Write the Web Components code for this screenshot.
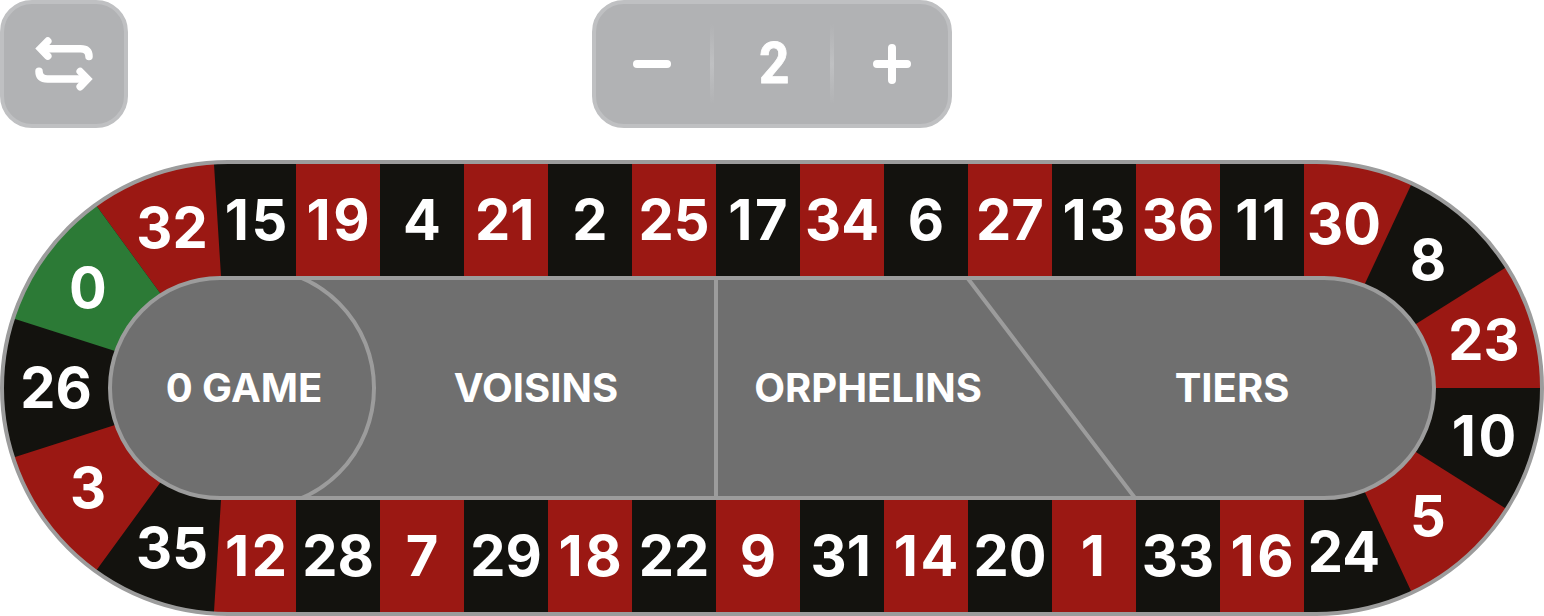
<!DOCTYPE html>
<html lang="en">
<head>
<meta charset="utf-8">
<title>Racetrack</title>
<style>
  body { margin: 0; background: #fff; font-family: Inter, "Liberation Sans", sans-serif; font-weight: 700; color: #fff; }
</style>
</head>
<body>
<race-track></race-track>

<template id="t-track">
  <style>
    :host { display: flex; flex-direction: column; gap: 32px; width: 1544px; height: 616px; }
    header { display: grid; grid-template-columns: 1fr 360px 1fr; height: 128px; }
    .swap { width: 128px; }
  </style>
  <header>
    <control-panel class="swap">
      <svg width="120" height="120" viewBox="4 4 120 120" fill="none" stroke="#fff" stroke-width="7.5" stroke-linecap="round" stroke-linejoin="miter">
        <path d="M42 48.700H80.500Q89 48.700 89 56.500"/>
        <path d="M39 71.300Q39 79 47.500 79H86"/>
        <path d="M47.800 41.100L40.500 48.600L47.800 56.100"/>
        <path d="M80.200 71.500L87.500 79L80.200 86.700"/>
      </svg>
    </control-panel>
    <control-panel>
      <number-stepper value="2"></number-stepper>
    </control-panel>
  </header>
  <track-board></track-board>
</template>

<template id="t-panel">
  <style>
    :host { display: flex; box-sizing: border-box; height: 128px; border: 4px solid #bfc0c2; border-radius: 32px; background: #b1b2b4; }
  </style>
  <slot></slot>
</template>

<template id="t-stepper">
  <style>
    :host { display: grid; grid-template-columns: 112px 8px 112px 8px 112px; align-items: center; justify-items: center; width: 352px; height: 120px; }
    i { width: 4px; height: 80px; background: linear-gradient(#bfc0c200, #bfc0c2, #bfc0c200); }
    .value { padding-left: 4px; font: 700 57px/64px Roboto, "Liberation Sans", sans-serif; transform: scaleX(.93); -webkit-text-stroke: .8px #fff; }
    svg { display: block; }
  </style>
  <svg width="40" height="40" stroke="#fff" stroke-width="8" stroke-linecap="round"><path d="M5 20H35"/></svg>
  <i></i>
  <span class="value"></span>
  <i></i>
  <svg width="40" height="40" stroke="#fff" stroke-width="8" stroke-linecap="round"><path d="M5 20H35M20 4V36"/></svg>
</template>

<template id="t-cell">
  <style>
    :host { display: flex; align-items: center; justify-content: center; width: 84px; height: 112px; font-size: 56px; line-height: 68px; white-space: nowrap; background: var(--pocket, transparent); }
    :host([color="red"]) { --pocket: #9b1813; }
    :host([color="black"]) { --pocket: #13120e; }
    /* The narrow figure 1 takes a little extra room on its right. */
    :host([ones="first"]) span { letter-spacing: 2.6px; margin-right: -2.6px; }
    :host([ones="last"]) span { padding-right: 2.6px; }
    :host([ones="both"]) span { letter-spacing: 2.6px; }
  </style>
  <span><slot></slot></span>
</template>

<template id="t-board">
  <style>
    :host { display: grid; grid-template-rows: 112px 4px 216px 4px 112px; position: relative; box-sizing: border-box; height: 456px; padding: 4px 0; }
    .shape { position: absolute; left: 0; top: 0; }
    .row { display: flex; position: relative; margin-left: 296px; }
    .top { grid-row: 1; }
    .bottom { grid-row: 5; }
    .bets { grid-row: 3; position: relative; display: grid; grid-template-columns: 264px 320px 344px 384px; margin-left: 112px; align-items: center; justify-items: center; font-size: 40px; line-height: 48px; white-space: nowrap; }
    .pin { position: absolute; transform: translate(-50%, -50%); }
  </style>
  <svg class="shape" width="1544" height="456" viewBox="0 160 1544 456">
    <defs>
      <clipPath id="rim"><rect x="1" y="161" width="1542" height="454" rx="227"/></clipPath>
      <clipPath id="infield"><rect x="110" y="278" width="1324" height="220" rx="110"/></clipPath>
      <clipPath id="half"><rect x="280" y="270" width="110" height="240"/></clipPath>
    </defs>
    <g clip-path="url(#rim)">
      <rect y="160" width="1544" height="456" fill="#13120e"/>
      <g fill="#9b1813">
        <path d="M66 164V150H213.100L221 276V300H165L160 293Z"/>
        <path d="M1304 150H1427.400L1365 283.500L1360 294H1304Z"/>
        <path d="M1594 212V388H1420L1400 334Z"/>
        <path d="M-10 465V626H66V612L160 483L170 469L125 422L115 425Z"/>
        <path d="M213.100 626L221 500V480H297V626Z"/>
        <path d="M1427.400 626L1365 492.500L1360 482L1400 442L1594 564V626Z"/>
      </g>
      <path fill="#2c7a36" d="M-10 311V150H66V164L160 293L170 307L125 354L115 351Z"/>
    </g>
    <g fill="none" stroke="#9c9c9c" stroke-width="4">
      <rect x="2" y="162" width="1540" height="452" rx="226"/>
      <rect x="110" y="278" width="1324" height="220" rx="110" fill="#6f6f6f"/>
      <g clip-path="url(#infield)">
        <circle cx="254" cy="388" r="120" clip-path="url(#half)"/>
        <path d="M716 278V498M967.500 278L1135 498"/>
      </g>
    </g>
  </svg>
  <div class="row top"></div>
  <div class="bets"><span>0 GAME</span><span>VOISINS</span><span>ORPHELINS</span><span>TIERS</span></div>
  <div class="row bottom"></div>
</template>

<script>
  const clone = id => document.getElementById(id).content.cloneNode(true);

  class Base extends HTMLElement {
    constructor(id) {
      super();
      this.attachShadow({ mode: 'open' }).append(clone(id));
    }
  }

  customElements.define('control-panel', class extends Base {
    constructor() { super('t-panel'); }
  });

  customElements.define('number-stepper', class extends Base {
    constructor() { super('t-stepper'); }
    connectedCallback() {
      this.shadowRoot.querySelector('.value').textContent = this.getAttribute('value');
    }
  });

  customElements.define('track-pocket', class extends Base {
    constructor() { super('t-cell'); }
    connectedCallback() {
      const n = this.textContent;
      if (n === '11') this.setAttribute('ones', 'both');
      else if (n.endsWith('1')) this.setAttribute('ones', 'last');
      else if (n.startsWith('1')) this.setAttribute('ones', 'first');
    }
  });

  // Straight runs of pockets, alternating colours.
  const ROWS = {
    '.top': [[19, 4, 21, 2, 25, 17, 34, 6, 27, 13, 36, 11], ['red', 'black']],
    '.bottom': [[28, 7, 29, 18, 22, 9, 31, 14, 20, 1, 33, 16], ['black', 'red']]
  };
  // Numbers on the curved ends: [number, centre x, centre y].
  const ENDS = [
    [15, 256, 60], [32, 172, 68], [0, 88, 128], [26, 56, 228], [3, 88, 328], [35, 172, 388], [12, 256, 396],
    [30, 1344, 64], [8, 1428, 100], [23, 1484, 180], [10, 1484, 276], [5, 1428, 356], [24, 1344, 392]
  ];

  customElements.define('track-board', class extends Base {
    constructor() {
      super('t-board');
      const root = this.shadowRoot;
      for (const [sel, [numbers, colors]] of Object.entries(ROWS)) {
        numbers.forEach((n, i) => {
          const cell = document.createElement('track-pocket');
          cell.setAttribute('color', colors[i % 2]);
          cell.textContent = n;
          root.querySelector(sel).append(cell);
        });
      }
      for (const [n, x, y] of ENDS) {
        const pin = document.createElement('track-pocket');
        pin.className = 'pin';
        pin.style.left = x + 'px';
        pin.style.top = y + 'px';
        pin.textContent = n;
        root.append(pin);
      }
    }
  });

  customElements.define('race-track', class extends Base {
    constructor() { super('t-track'); }
  });
</script>
</body>
</html>
